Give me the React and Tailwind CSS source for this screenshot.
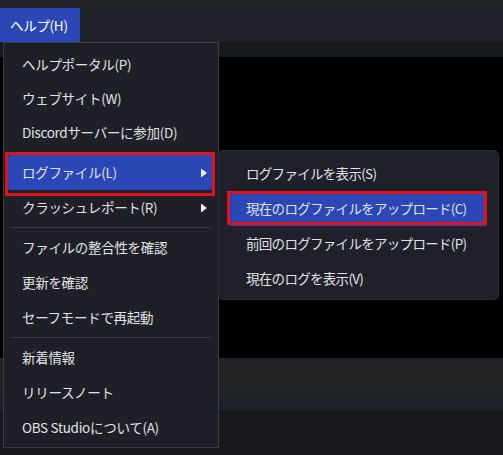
import React from "react";

const font = { fontFamily: '"Noto Sans CJK JP", "Noto Sans", sans-serif' };

const Arrow = ({ active }) => (
  <svg
    width="6"
    height="9"
    viewBox="0 0 6 9"
    className={`absolute top-1/2 -translate-y-1/2 ${active ? "right-[7px]" : "right-[11px]"}`}
  >
    <polygon points="0,0 6,4.5 0,9" fill="#f0f0f0" />
  </svg>
);

const Item = ({ label, h = "h-[35px]", active = false, arrow = false }) => (
  <div
    className={`relative flex items-center whitespace-nowrap text-[13.5px] tracking-[-0.3px] text-[#e2e2e4] ${h} ${
      active ? "mx-[4px] pl-[14px] rounded-[2px] bg-[#2a47b5]" : "pl-[18px]"
    }`}
  >
    {label}
    {arrow && <Arrow active={active} />}
  </div>
);

const Separator = () => (
  <div className="h-[5px] flex items-center px-[7px]">
    <div className="h-px w-full bg-[#3a3d46]" />
  </div>
);

const SubItem = ({ label, active = false }) => (
  <div
    className={`flex items-center h-[35px] whitespace-nowrap text-[13.5px] tracking-[-0.7px] text-[#e2e2e4] ${
      active ? "mx-[11px] pl-[16px] rounded-[2px] bg-[#2a47b5]" : "pl-[27px]"
    }`}
  >
    {label}
  </div>
);

export default function App() {
  return (
    <div className="relative w-[503px] h-[455px] overflow-hidden bg-black" style={font}>
      <div className="h-[8px] bg-[#252428]" />
      <div className="h-[34px] bg-[#1f2029] flex">
        <div className="w-[80px] h-full bg-[#2a47b5] flex items-center pl-[10px] text-[13.5px] tracking-[-0.3px] text-white">
          ヘルプ(H)
        </div>
      </div>
      <div className="h-[15px] bg-[#18191d]" />
      <div className="h-[301px] bg-black" />
      <div className="h-[38px] bg-[#232224]" />
      <div className="h-[14px] bg-[#1f2129]" />
      <div className="h-[45px] bg-[#17181c]" />

      {/* main menu */}
      <div className="absolute left-[3px] top-[42px] w-[216px] h-[406px] bg-[#1e1f27] border border-[#3a3d46] pt-[4px]">
        <Item label="ヘルプポータル(P)" h="h-[34px]" />
        <Item label="ウェブサイト(W)" h="h-[34px]" />
        <Item label="Discordサーバーに参加(D)" h="h-[34px]" />
        <div className="h-[6px]" />
        <Item label="ログファイル(L)" active arrow />
        <Item label="クラッシュレポート(R)" arrow />
        <Separator />
        <Item label="ファイルの整合性を確認" />
        <Item label="更新を確認" />
        <Item label="セーフモードで再起動" />
        <Separator />
        <Item label="新着情報" />
        <Item label="リリースノート" />
        <Item label="OBS Studioについて(A)" />
      </div>

      {/* submenu */}
      <div className="absolute left-[218px] top-[150px] w-[281px] h-[150px] bg-[#1f2029] border border-[#2c2f38] rounded-[5px] pt-[5px]">
        <SubItem label="ログファイルを表示(S)" />
        <SubItem label="現在のログファイルをアップロード(C)" active />
        <SubItem label="前回のログファイルをアップロード(P)" />
        <SubItem label="現在のログを表示(V)" />
      </div>

      {/* red annotation boxes */}
      <div className="absolute left-[5px] top-[152px] w-[210px] h-[44px] border-[3px] border-[#e0141e]" />
      <div className="absolute left-[227px] top-[191px] w-[260px] h-[34px] border-[3px] border-[#e0141e]" />
    </div>
  );
}
